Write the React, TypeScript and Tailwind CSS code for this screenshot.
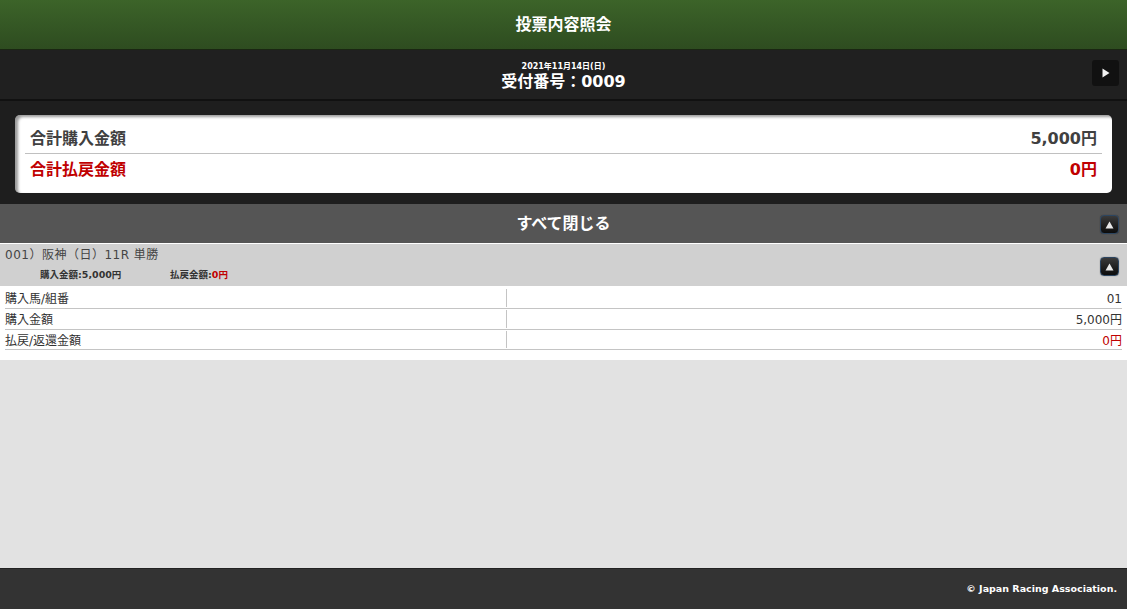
import React from "react";

const FONT = { fontFamily: '"DejaVu Sans", "Noto Sans CJK JP", sans-serif' };

function UpButton() {
  return (
    <div className="w-[19px] h-[19px] rounded-[4px] border border-[#2c4560] bg-gradient-to-b from-[#3a3a3a] to-[#0c0c0c] flex items-center justify-center shadow-[0_0_1px_rgba(0,0,0,0.6)]">
      <svg width="9" height="8" viewBox="0 0 9 8">
        <polygon points="4.5,0.5 8.5,7.5 0.5,7.5" fill="#e8e8e8" />
      </svg>
    </div>
  );
}

function Row({ label, value, red, h }: { label: string; value: string; red?: boolean; h: string }) {
  return (
    <div className={"flex border-b border-[#c4c4c4] text-[12px] leading-[18px] " + h}>
      <div className="w-[502px] pt-[1px] border-r border-[#c4c4c4] my-[1px] text-[#333]">{label}</div>
      <div className={"flex-1 text-right pt-[2px] " + (red ? "text-[#c00000]" : "text-[#333]")}>{value}</div>
    </div>
  );
}

export default function App() {
  return (
    <div className="w-[1127px] h-[609px] flex flex-col bg-[#e2e2e2] overflow-hidden" style={FONT}>
      {/* header */}
      <div className="h-[50px] bg-gradient-to-b from-[#3c6429] to-[#2e4c20] border-b border-[#1a2612] flex items-center justify-center">
        <span className="text-white font-bold text-[16px] leading-none pt-[1px]">投票内容照会</span>
      </div>
      {/* sub header */}
      <div className="h-[51px] bg-[#202020] border-b-2 border-[#111] flex items-center justify-center relative">
        <div className="flex flex-col items-center text-white font-bold pt-[5px]">
          <span className="text-[8px] leading-[10px]">2021年11月14日(日)</span>
          <span className="text-[16px] leading-[20px]">受付番号：0009</span>
        </div>
        <div className="absolute right-[8px] top-[10px] w-[27px] h-[26px] rounded-[3px] bg-[#111] flex items-center justify-center">
          <svg width="8" height="10" viewBox="0 0 8 10">
            <polygon points="0.5,0.5 7.5,5 0.5,9.5" fill="#f2f2f2" />
          </svg>
        </div>
      </div>
      {/* totals */}
      <div className="bg-[#1e1e1e] pt-[14px] pb-[11px] px-[15px]">
        <div className="bg-white rounded-[5px] px-[10px] py-[7px] shadow-[inset_3px_2px_3px_rgba(0,0,0,0.4)]">
          <div className="h-[32px] border-b border-[#c0c0c0] flex items-center justify-between px-[5px] text-[16px] font-bold text-[#404040] pt-[2px]">
            <span>合計購入金額</span>
            <span>5,000円</span>
          </div>
          <div className="h-[32px] flex items-center justify-between px-[5px] text-[16px] font-bold text-[#c00000]">
            <span>合計払戻金額</span>
            <span>0円</span>
          </div>
        </div>
      </div>
      {/* close all bar */}
      <div className="h-[40px] bg-[#555555] border-b border-white flex items-center justify-center relative">
        <span className="text-white font-bold text-[16px] leading-none">すべて閉じる</span>
        <div className="absolute right-[8px] top-[11px]">
          <UpButton />
        </div>
      </div>
      {/* race header */}
      <div className="h-[42px] bg-[#d0d0d0] relative px-[5px] pt-[3px]">
        <div className="text-[12px] leading-[16px] text-[#444] tracking-[0.5px]">001）阪神（日）11R 単勝</div>
        <div className="flex text-[9.5px] leading-[12px] font-bold text-[#333] mt-[6px]">
          <span className="ml-[35px] w-[130px]">購入金額:5,000円</span>
          <span>
            払戻金額:<span className="text-[#c00000]">0円</span>
          </span>
        </div>
        <div className="absolute right-[8px] top-[13px]">
          <UpButton />
        </div>
      </div>
      {/* table */}
      <div className="bg-white px-[5px] pt-[2px] pb-[10px]">
        <Row label="購入馬/組番" value="01" h="h-[21px]" />
        <Row label="購入金額" value="5,000円" h="h-[21px]" />
        <Row label="払戻/返還金額" value="0円" red h="h-[20px]" />
      </div>
      <div className="flex-1" />
      {/* footer */}
      <div className="h-[41px] bg-[#333333] border-t border-[#222] flex items-center justify-end pr-[10px]">
        <span className="text-white font-bold text-[9.5px] leading-none">© Japan Racing Association.</span>
      </div>
    </div>
  );
}
